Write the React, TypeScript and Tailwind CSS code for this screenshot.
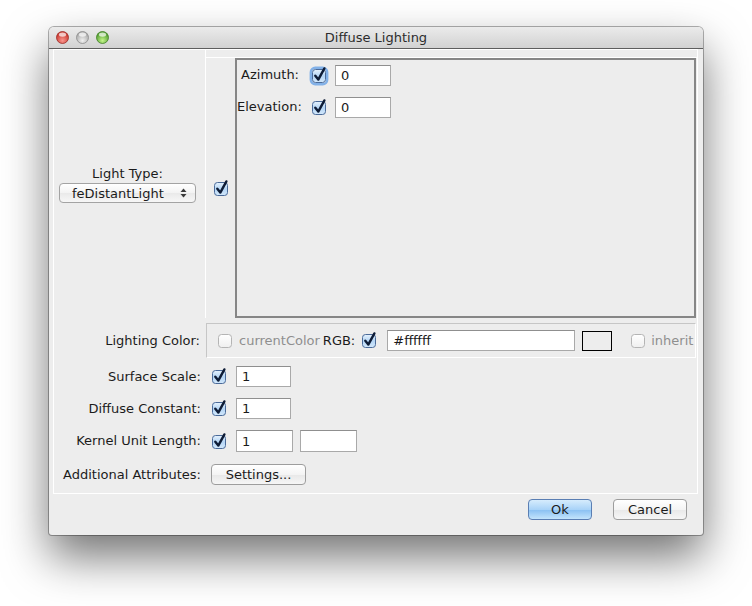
import React, { useId } from 'react';

const Check = ({ checked = false, focus = false, dim = false }: { checked?: boolean; focus?: boolean; dim?: boolean }) => {
  const id = 'g' + useId().replace(/[^a-zA-Z0-9]/g, '');
  return (
    <svg width="16" height="17" viewBox="0 0 16 17" className="shrink-0 overflow-visible">
      <defs>
        <linearGradient id={id} x1="0" y1="0" x2="0" y2="1">
          {checked ? (
            <>
              <stop offset="0" stopColor="#e6f2fd" />
              <stop offset="0.5" stopColor="#b4d5f5" />
              <stop offset="1" stopColor="#d3e8fb" />
            </>
          ) : (
            <>
              <stop offset="0" stopColor="#ffffff" />
              <stop offset="1" stopColor={dim ? '#efefef' : '#e4e4e4'} />
            </>
          )}
        </linearGradient>
      </defs>
      {focus && <rect x="-0.2" y="0.8" width="16.4" height="16.4" rx="4.5" fill="none" stroke="#6fa6e6" strokeWidth="2.4" opacity="0.85" />}
      <rect x="1.5" y="2.5" width="13" height="13" rx="3" fill={`url(#${id})`} stroke={checked ? '#4a6a99' : dim ? '#b4b4b4' : '#8f8f8f'} />
      {checked && (
        <path d="M4.3 8.8 L7.3 12.6 L13.4 1.4" fill="none" stroke="#0e1c36" strokeWidth="2.4" strokeLinecap="round" strokeLinejoin="round" />
      )}
    </svg>
  );
};

const Field = ({ value = '', className = '' }: { value?: string; className?: string }) => (
  <div className={`h-[21px] bg-white border border-[#a9a9a9] border-t-[#8f8f8f] pl-[5px] flex items-center leading-none ${className}`}>
    {value}
  </div>
);

const Light = ({ from, to, edge }: { from: string; to: string; edge: string }) => {
  const id = 'l' + useId().replace(/[^a-zA-Z0-9]/g, '');
  return (
    <svg width="13" height="13" viewBox="0 0 13 13">
      <defs>
        <radialGradient id={id} cx="0.5" cy="0.75" r="0.65">
          <stop offset="0" stopColor={from} />
          <stop offset="1" stopColor={to} />
        </radialGradient>
      </defs>
      <circle cx="6.5" cy="6.5" r="6" fill={`url(#${id})`} stroke={edge} strokeWidth="0.8" />
      <ellipse cx="6.5" cy="3.6" rx="3.6" ry="2.2" fill="white" opacity="0.7" />
    </svg>
  );
};

const TitleBar = () => (
  <div className="h-[22px] shrink-0 grid grid-cols-[1fr_auto_1fr] items-center border-b border-[#5e5e5e] bg-[linear-gradient(#ebebeb,#d2d2d2)]">
    <div className="flex items-center gap-[7px] pl-[7px]">
      <Light from="#f9958d" to="#c8352c" edge="#9a2a24" />
      <Light from="#f0f0f0" to="#a8a8a8" edge="#8a8a8a" />
      <Light from="#c4f58a" to="#4f9b2e" edge="#3f7f25" />
    </div>
    <div className="text-[#2c2c2c] leading-none">Diffuse Lighting</div>
    <div />
  </div>
);

const Dropdown = () => (
  <div className="mt-[3px] w-[137px] h-[20px] rounded-[4px] border border-[#a3a3a3] bg-[linear-gradient(#ffffff,#f3f3f3_50%,#e9e9e9_51%,#f7f7f7)] flex items-center pl-[12px] pr-[8px] leading-none">
    <span className="flex-1">feDistantLight</span>
    <svg width="7" height="10" viewBox="0 0 7 10">
      <path d="M3.5 0.5 L6.5 4 L0.5 4 Z" fill="#3a3a3a" />
      <path d="M3.5 9.5 L6.5 6 L0.5 6 Z" fill="#3a3a3a" />
    </svg>
  </div>
);

const LightTypeRow = () => (
  <div className="h-[268px] flex">
    <div className="w-[151px] pr-[4px] flex flex-col items-center justify-center pt-[2px]">
      <div className="leading-none">Light Type:</div>
      <Dropdown />
    </div>
    <div className="flex-1 border-l border-white flex flex-col pt-[7px]">
      <div className="flex-1 flex border-t border-white">
        <div className="w-[29px] flex items-center justify-center">
          <Check checked />
        </div>
        <div className="flex-1 mr-[1px] border-2 border-[#868686] pt-[5px] flex flex-col gap-[12px]">
          <div className="h-[20px] flex items-center">
            <div className="w-[62px] text-right">Azimuth:</div>
            <div className="ml-[12px]"><Check checked focus /></div>
            <Field value="0" className="ml-[8px] w-[56px]" />
          </div>
          <div className="h-[20px] flex items-center">
            <div className="w-[62px] text-right">Elevation:</div>
            <div className="ml-[12px]"><Check checked /></div>
            <Field value="0" className="ml-[8px] w-[56px]" />
          </div>
        </div>
      </div>
    </div>
  </div>
);

const LightingColorRow = () => (
  <div className="mt-[5px] h-[35px] flex items-center">
    <div className="w-[151px] pr-[5px] text-right">Lighting Color:</div>
    <div className="ml-[1px] mr-[1px] flex-1 h-full border border-[#c6c6c6] border-b-white border-r-white flex items-center pl-[10px]">
      <Check dim />
      <span className="ml-[6px] text-[#8f8f8f]">currentColor</span>
      <span className="ml-[3px]">RGB:</span>
      <div className="ml-[6px]"><Check checked /></div>
      <Field value="#ffffff" className="ml-[10px] w-[188px]" />
      <div className="ml-[7px] w-[30px] h-[20px] border border-black bg-[#ededed]" />
      <div className="ml-[18px]"><Check dim /></div>
      <span className="ml-[5px] text-[#8f8f8f]">inherit</span>
    </div>
  </div>
);

const Row = ({ label, children, h = 'h-[21px]' }: { label: string; children: React.ReactNode; h?: string }) => (
  <div className={`${h} flex items-center`}>
    <div className="w-[151px] pr-[4px] text-right">{label}</div>
    {children}
  </div>
);

const MainPanel = () => (
  <div className="h-[445px] border border-white flex flex-col">
    <LightTypeRow />
    <LightingColorRow />
    <div className="mt-[8px] flex flex-col">
      <Row label="Surface Scale:">
        <div className="ml-[6px]"><Check checked /></div>
        <Field value="1" className="ml-[9px] w-[55px]" />
      </Row>
      <div className="mt-[11px]">
        <Row label="Diffuse Constant:">
          <div className="ml-[6px]"><Check checked /></div>
          <Field value="1" className="ml-[9px] w-[55px]" />
        </Row>
      </div>
      <div className="mt-[11px]">
        <Row label="Kernel Unit Length:" h="h-[22px]">
          <div className="ml-[6px]"><Check checked /></div>
          <Field value="1" className="ml-[9px] w-[57px] h-[22px]" />
          <Field className="ml-[7px] w-[57px] h-[22px]" />
        </Row>
      </div>
      <div className="mt-[12px]">
        <Row label="Additional Attributes:">
          <button className="ml-[6px] w-[95px] h-[21px] rounded-[4px] border border-[#9d9d9d] bg-[linear-gradient(#ffffff,#f4f4f4_50%,#e8e8e8_51%,#f6f6f6)] leading-none">
            Settings...
          </button>
        </Row>
      </div>
    </div>
  </div>
);

const ButtonRow = () => (
  <div className="flex-1 flex justify-end items-start pt-[5px] pr-[11px]">
    <button className="w-[64px] h-[21px] rounded-[4px] border border-[#5a7eb3] bg-[linear-gradient(#d6ecfd,#a9d3f8_50%,#88bff2_51%,#c3e4fc)] leading-none">
      Ok
    </button>
    <button className="ml-[21px] w-[74px] h-[21px] rounded-[4px] border border-[#9d9d9d] bg-[linear-gradient(#ffffff,#f4f4f4_50%,#e8e8e8_51%,#f6f6f6)] leading-none">
      Cancel
    </button>
  </div>
);

export default function App() {
  return (
    <div className="w-[752px] min-h-[606px] bg-white pt-[27px] pl-[49px] font-['DejaVu_Sans',sans-serif] text-[13px] text-[#1b1b1b]">
      <div className="w-[654px] h-[508px] flex flex-col rounded-t-[5px] rounded-b-[3px] overflow-hidden bg-[#ededed] shadow-[0_22px_46px_rgba(0,0,0,0.55),0_0_0_1px_rgba(0,0,0,0.3)]">
        <TitleBar />
        <div className="flex-1 flex flex-col pl-[4px] pr-[5px]">
          <MainPanel />
          <ButtonRow />
        </div>
      </div>
    </div>
  );
}
